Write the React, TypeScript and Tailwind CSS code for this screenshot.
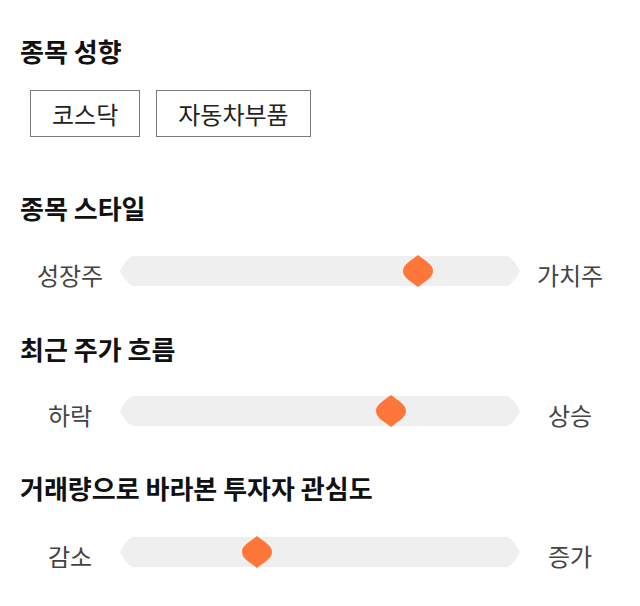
import React from "react";

const FONT = { fontFamily: '"Noto Sans CJK KR", "Noto Sans", sans-serif' };

interface SliderRowProps {
  left: string;
  right: string;
  value: number;
}

function TrackEnd({ flip }: { flip?: boolean }) {
  return (
    <svg
      width="13"
      height="30"
      viewBox="0 0 13 30"
      className={flip ? "block shrink-0 -scale-x-100" : "block shrink-0"}
    >
      <path d="M13.5,0 C8,1 3,9 0,15 C3,21 8,29 13.5,30 Z" fill="#efefef" />
    </svg>
  );
}

function Thumb() {
  return (
    <svg width="30" height="32" viewBox="0 0 30 32" className="block">
      <path
        d="M15,0 C22,6 30,9 30,16 C30,23 22,26 15,32 C8,26 0,23 0,16 C0,9 8,6 15,0 Z"
        fill="#ff763b"
      />
    </svg>
  );
}

function SliderRow({ left, right, value }: SliderRowProps) {
  return (
    <div className="flex items-center h-[30px]">
      <div className="w-[100px] text-center text-[24px] text-[#444] translate-y-[4px]">{left}</div>
      <div className="relative flex flex-1 h-[30px]">
        <TrackEnd />
        <div className="flex-1 bg-[#efefef]" />
        <TrackEnd flip />
        <div
          className="absolute top-[-1px] -translate-x-1/2"
          style={{ left: `${value}%` }}
        >
          <Thumb />
        </div>
      </div>
      <div className="w-[100px] text-center text-[24px] text-[#444] translate-y-[4px]">{right}</div>
    </div>
  );
}

function Title({ children }: { children: React.ReactNode }) {
  return (
    <h2 className="text-[26px] font-bold leading-[30px] text-[#111]">{children}</h2>
  );
}

export default function App() {
  return (
    <div className="w-[640px] h-[606px] bg-white px-[20px] pt-[36px]" style={FONT}>
      <Title>종목 성향</Title>
      <div className="flex gap-[16px] ml-[10px] mt-[24px]">
        {["코스닥", "자동차부품"].map((tag) => (
          <div
            key={tag}
            className="h-[47px] px-[21px] flex items-center border border-[#7a7a7a] text-[24px] text-[#222]"
          >
            {tag}
          </div>
        ))}
      </div>

      <div className="mt-[56px]">
        <Title>종목 스타일</Title>
        <div className="mt-[33px]">
          <SliderRow left="성장주" right="가치주" value={74.5} />
        </div>
      </div>

      <div className="mt-[48px]">
        <Title>최근 주가 흐름</Title>
        <div className="mt-[32px]">
          <SliderRow left="하락" right="상승" value={67.75} />
        </div>
      </div>

      <div className="mt-[47px]">
        <Title>거래량으로 바라본 투자자 관심도</Title>
        <div className="mt-[34px]">
          <SliderRow left="감소" right="증가" value={34.25} />
        </div>
      </div>
    </div>
  );
}
